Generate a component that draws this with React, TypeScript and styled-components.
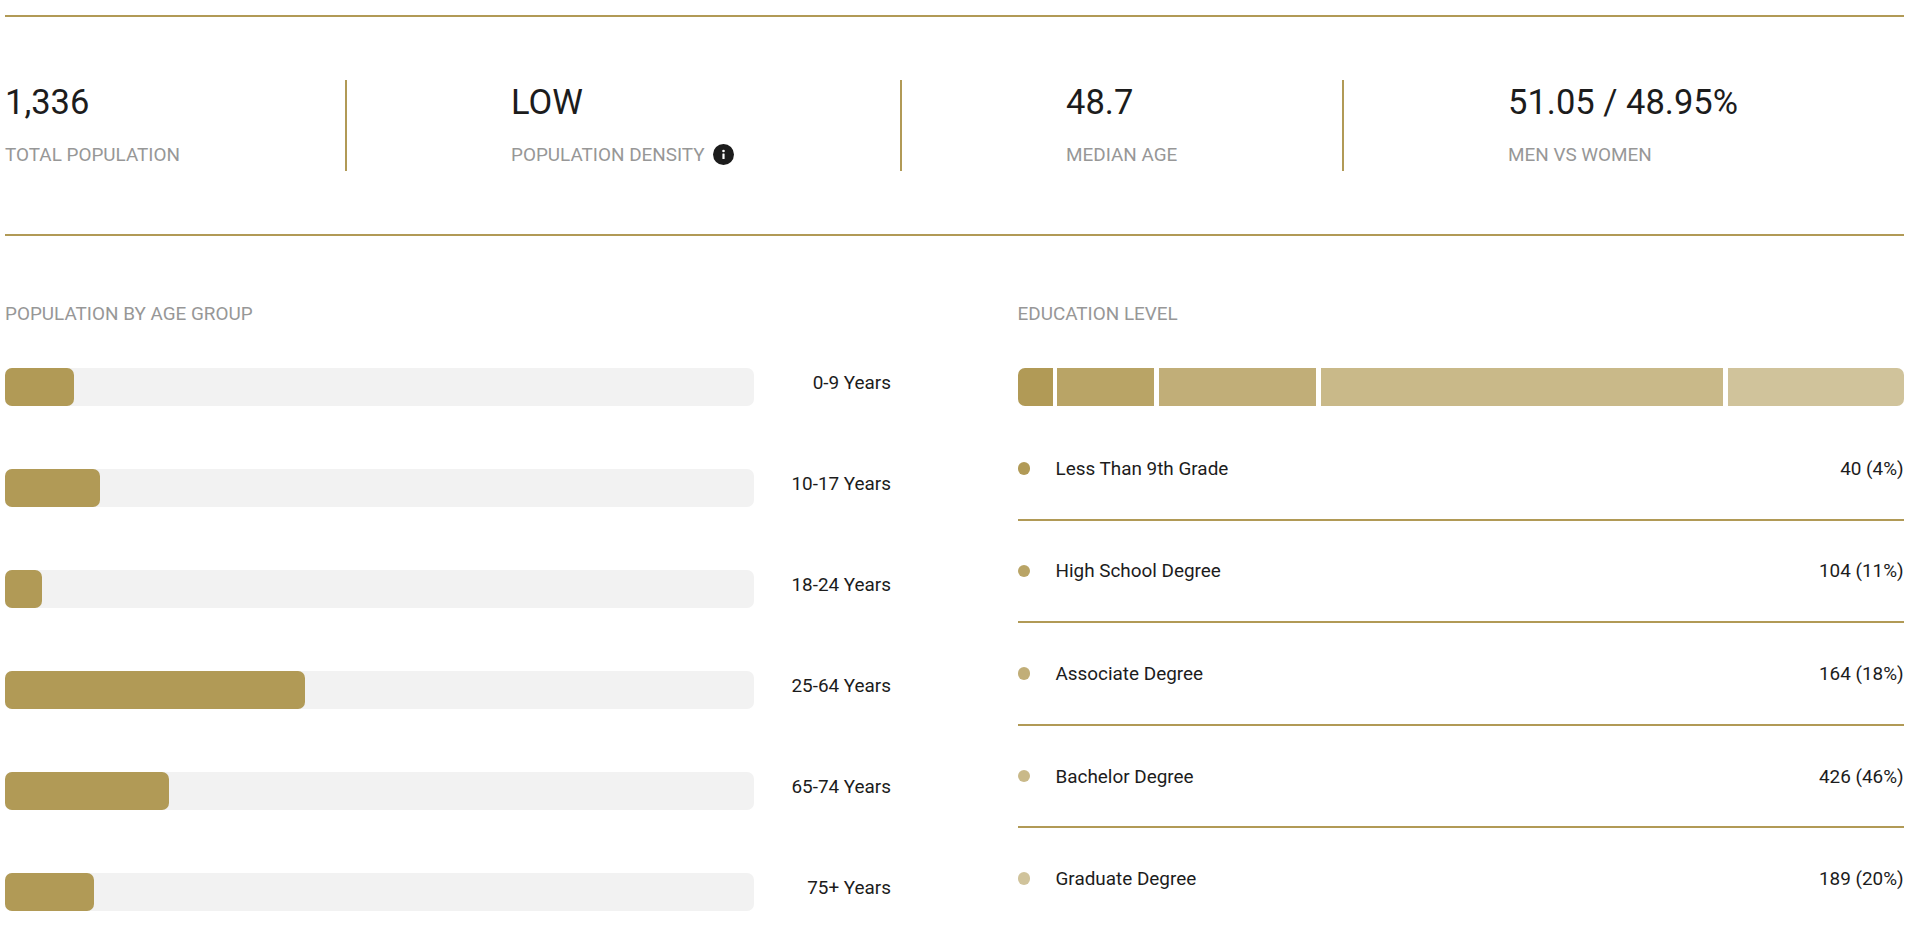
import React from 'react';
import styled, { createGlobalStyle } from 'styled-components';

const GOLD = '#b19a56';

const GlobalStyle = createGlobalStyle`
  html, body {
    margin: 0;
    padding: 0;
    background: #fff;
    font-family: Roboto, "Liberation Sans", sans-serif;
    color: #1c1c1c;
  }
`;

const stats = [
  { value: '1,336', label: 'TOTAL POPULATION' },
  { value: 'LOW', label: 'POPULATION DENSITY', info: true },
  { value: '48.7', label: 'MEDIAN AGE' },
  { value: '51.05 / 48.95%', label: 'MEN VS WOMEN' },
];

const ageGroups = [
  { label: '0-9 Years', width: 69 },
  { label: '10-17 Years', width: 94.5 },
  { label: '18-24 Years', width: 37 },
  { label: '25-64 Years', width: 299.5 },
  { label: '65-74 Years', width: 163.5 },
  { label: '75+ Years', width: 89 },
];

const education = [
  { label: 'Less Than 9th Grade', count: '40 (4%)', width: 35, color: '#b19a56' },
  { label: 'High School Degree', count: '104 (11%)', width: 97, color: '#b9a466' },
  { label: 'Associate Degree', count: '164 (18%)', width: 157.3, color: '#c1ae78' },
  { label: 'Bachelor Degree', count: '426 (46%)', width: 403, color: '#c9b989' },
  { label: 'Graduate Degree', count: '189 (20%)', width: 175.6, color: '#d0c39b' },
];

const InfoIcon = () => (
  <InfoSvg viewBox="0 0 21 21" aria-hidden="true">
    <circle cx="10.5" cy="10.5" r="10.5" fill="#1c1c1c" />
    <circle cx="10.5" cy="7" r="1.3" fill="#fff" />
    <rect x="9.4" y="9.4" width="2.2" height="5.6" rx="0.5" fill="#fff" />
  </InfoSvg>
);

const App = () => (
  <Page>
    <GlobalStyle />
    <StatsBar>
      {stats.map((stat, i) => (
        <Stat key={stat.label} $first={i === 0} $last={i === stats.length - 1}>
          <StatValue>{stat.value}</StatValue>
          <StatLabel>
            {stat.label}
            {stat.info && <InfoIcon />}
          </StatLabel>
        </Stat>
      ))}
    </StatsBar>
    <Columns>
      <section>
        <SectionTitle>POPULATION BY AGE GROUP</SectionTitle>
        {ageGroups.map((group) => (
          <AgeRow key={group.label}>
            <Track>
              <Fill $width={group.width} />
            </Track>
            <AgeLabel>{group.label}</AgeLabel>
          </AgeRow>
        ))}
      </section>
      <section>
        <SectionTitle>EDUCATION LEVEL</SectionTitle>
        <StackedBar>
          {education.map((item) => (
            <Segment key={item.label} $grow={item.width} $color={item.color} />
          ))}
        </StackedBar>
        <EducationList>
          {education.map((item) => (
            <EducationRow key={item.label}>
              <Dot $color={item.color} />
              <EducationName>{item.label}</EducationName>
              <span>{item.count}</span>
            </EducationRow>
          ))}
        </EducationList>
      </section>
    </Columns>
  </Page>
);

const Page = styled.div`
  box-sizing: border-box;
  height: 927px;
  overflow: hidden;
  padding: 15px 16.4px 0 5px;
`;

const StatsBar = styled.div`
  display: grid;
  grid-template-columns: 341.5px 555px 442px 1fr;
  height: 221px;
  box-sizing: border-box;
  padding-top: 63px;
  border-top: 2px solid ${GOLD};
  border-bottom: 2px solid ${GOLD};
`;

const Stat = styled.div<{ $first: boolean; $last: boolean }>`
  box-sizing: border-box;
  height: 91px;
  padding-left: ${(p) => (p.$first ? '0' : '164.5px')};
  border-right: ${(p) => (p.$last ? 'none' : `2px solid ${GOLD}`)};
`;

const StatValue = styled.div`
  font-size: 34.5px;
  line-height: 44px;
  color: #1c1c1c;
`;

const StatLabel = styled.div`
  display: flex;
  align-items: center;
  gap: 8.5px;
  margin-top: 20px;
  font-size: 18.9px;
  line-height: 21px;
  color: #979797;
`;

const InfoSvg = styled.svg`
  width: 21px;
  height: 21px;
  flex: none;
`;

const Columns = styled.div`
  display: grid;
  grid-template-columns: 886px 1fr;
  column-gap: 126.5px;
  padding-top: 67px;
`;

const SectionTitle = styled.div`
  font-size: 18.9px;
  line-height: 21px;
  color: #979797;
  margin-bottom: 44px;
`;

const AgeRow = styled.div`
  display: grid;
  grid-template-columns: 749px 1fr;
  align-items: start;
  height: 38px;
  margin-bottom: 63px;
`;

const Track = styled.div`
  height: 38px;
  border-radius: 7px;
  background: #f2f2f2;
`;

const Fill = styled.div.attrs<{ $width: number }>((p) => ({
  style: { width: `${p.$width}px` },
}))<{ $width: number }>`
  height: 100%;
  border-radius: 7px;
  background: ${GOLD};
`;

const AgeLabel = styled.div`
  font-size: 18.9px;
  line-height: 30px;
  text-align: right;
`;

const StackedBar = styled.div`
  display: flex;
  gap: 4.6px;
  height: 38px;
  border-radius: 7px;
  overflow: hidden;
`;

const Segment = styled.div<{ $grow: number; $color: string }>`
  flex: ${(p) => p.$grow} 1 0;
  background: ${(p) => p.$color};
`;

const EducationList = styled.div`
  margin-top: 12px;
`;

const EducationRow = styled.div`
  display: flex;
  align-items: center;
  box-sizing: border-box;
  height: 102.6px;
  font-size: 18.9px;
  border-bottom: 2px solid ${GOLD};

  &:last-child {
    border-bottom-color: transparent;
  }
`;

const Dot = styled.span<{ $color: string }>`
  width: 12.5px;
  height: 12.5px;
  border-radius: 50%;
  flex: none;
  background: ${(p) => p.$color};
`;

const EducationName = styled.span`
  margin-left: 25.5px;
  flex: 1;
`;

export default App;
